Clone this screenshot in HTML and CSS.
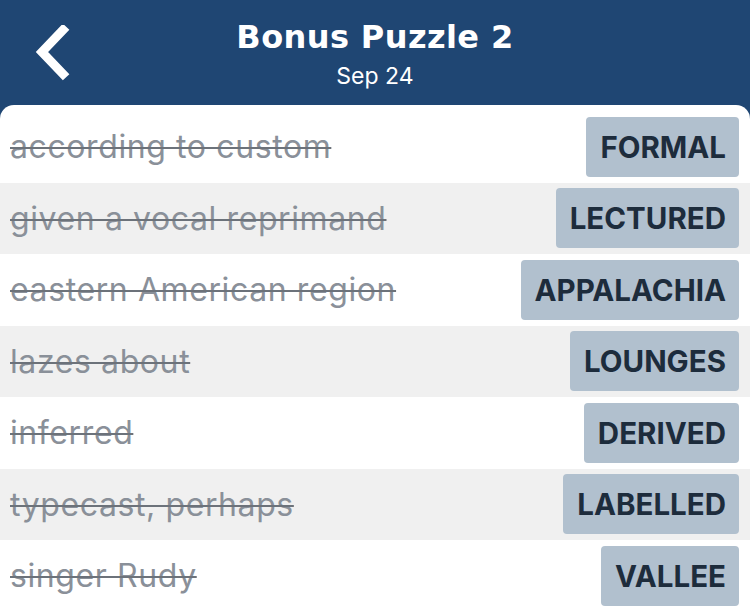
FILE: index.html
```html
<!DOCTYPE html>
<html>
<head>
<meta charset="utf-8">
<link rel="stylesheet" href="styles.css">
</head>
<body>
<div class="app">
  <header class="top">
    <button class="back" aria-label="Back">
      <svg width="40" height="58" viewBox="0 0 40 58"><path d="M29 5 L8 27 L29 49" fill="none" stroke="#fff" stroke-width="9" stroke-linecap="square" stroke-linejoin="miter"/></svg>
    </button>
    <div class="titles">
      <h1 class="title">Bonus Puzzle 2</h1>
      <div class="date">Sep 24</div>
    </div>
  </header>
  <main class="card">
    <div class="row"><span class="clue">according to custom</span><span class="ans">FORMAL</span></div>
    <div class="row alt"><span class="clue">given a vocal reprimand</span><span class="ans">LECTURED</span></div>
    <div class="row"><span class="clue">eastern American region</span><span class="ans">APPALACHIA</span></div>
    <div class="row alt"><span class="clue">lazes about</span><span class="ans">LOUNGES</span></div>
    <div class="row"><span class="clue">inferred</span><span class="ans">DERIVED</span></div>
    <div class="row alt"><span class="clue">typecast, perhaps</span><span class="ans">LABELLED</span></div>
    <div class="row"><span class="clue">singer Rudy</span><span class="ans">VALLEE</span></div>
  </main>
</div>
</body>
</html>
```
FILE: styles.css
```css
html, body {
  margin: 0;
  padding: 0;
  background: #1f4673;
  overflow: hidden;
}
.app {
  width: 750px;
  height: 611px;
  display: flex;
  flex-direction: column;
}
.top {
  position: relative;
  height: 105px;
  flex: none;
  display: flex;
  justify-content: center;
}
.back {
  position: absolute;
  left: 34px;
  top: 25px;
  background: none;
  border: 0;
  padding: 0;
  width: 40px;
  height: 58px;
}
.back svg { display: block; }
.titles {
  display: flex;
  flex-direction: column;
  align-items: center;
  color: #fff;
}
.title {
  margin: 17px 0 0;
  font-family: "DejaVu Sans", sans-serif;
  font-size: 32px;
  font-weight: 700;
  letter-spacing: 0.4px;
  line-height: 40px;
}
.date {
  margin-top: 5px;
  font-family: Inter, sans-serif;
  font-size: 23px;
  line-height: 28px;
}
.card {
  flex: 1;
  background: #fff;
  border-radius: 14px 14px 0 0;
  padding-top: 6px;
}
.row {
  height: 71.5px;
  display: flex;
  align-items: center;
  justify-content: space-between;
  padding: 0 11px 0 10px;
}
.row.alt { background: #f0f0f0; }
.clue {
  font-family: Inter, sans-serif;
  font-size: 32px;
  letter-spacing: 0.6px;
  color: #8a9099;
  text-decoration: line-through;
  text-decoration-thickness: 2px;
  text-decoration-color: #6c727a;
}
.ans {
  height: 60px;
  box-sizing: border-box;
  display: flex;
  align-items: center;
  padding: 0 13px 0 14px;
  background: #b1c0ce;
  border-radius: 4px;
  font-family: Inter, sans-serif;
  font-weight: 700;
  font-size: 29.5px;
  color: #1d2c3c;
}
```
